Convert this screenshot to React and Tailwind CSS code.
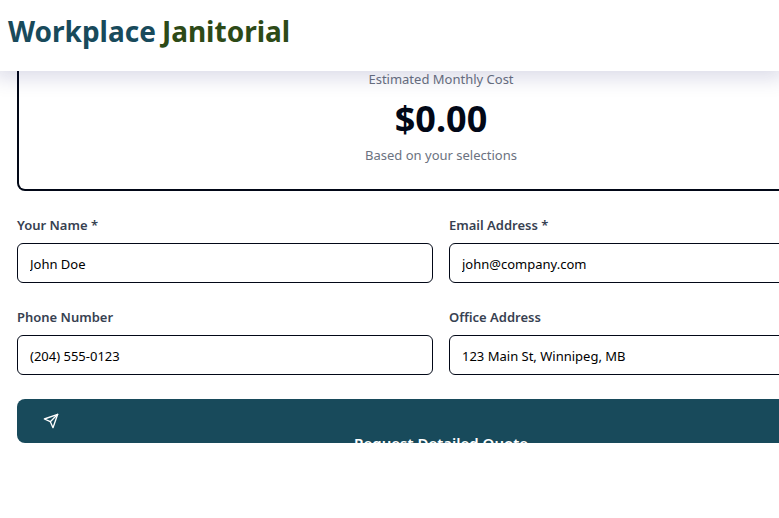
const fields = [
  { id: "name", label: "Your Name *", type: "text", value: "John Doe" },
  { id: "email", label: "Email Address *", type: "email", value: "john@company.com" },
  { id: "phone", label: "Phone Number", type: "tel", value: "(204) 555-0123" },
  { id: "address", label: "Office Address", type: "text", value: "123 Main St, Winnipeg, MB" },
];

function SendIcon() {
  return (
    <svg
      className="size-4 shrink-0"
      viewBox="0 0 24 24"
      fill="none"
      stroke="currentColor"
      strokeWidth="2"
      strokeLinecap="round"
      strokeLinejoin="round"
      aria-hidden="true"
    >
      <path d="m22 2-7 20-4-9-9-4Z" />
      <path d="M22 2 11 13" />
    </svg>
  );
}

function Field({ id, label, type, value }) {
  return (
    <div className="flex flex-col gap-2">
      <label htmlFor={id} className="text-[13px] leading-5 font-semibold text-[#374151]">
        {label}
      </label>
      <input
        id={id}
        type={type}
        placeholder={value}
        className="h-10 w-full rounded-md border border-[#020817] bg-white px-3 pt-0.5 text-[13px] text-black placeholder:text-black"
      />
    </div>
  );
}

export default function App() {
  return (
    <div className="min-h-screen overflow-hidden bg-white font-['Noto_Sans','Open_Sans',sans-serif]">
      <header className="relative z-10 bg-white px-2 pt-[11px] pb-5 shadow-[0_0_20px_6px_rgba(10,10,100,0.16)]">
        <a href="#" className="flex gap-1.5 text-[28px] leading-10 font-bold">
          <span className="text-[#184a5b]">Workplace</span>
          <span className="text-[#2d4a17]">Janitorial</span>
        </a>
      </header>
      <main className="min-w-[882px] px-[17px]">
        <section className="rounded-b-lg border-2 border-t-0 border-[#020817] px-6 pb-6 text-center text-[13px] text-[#6b7280]">
          <p className="leading-4">Estimated Monthly Cost</p>
          <p className="pt-3.5 pb-2 text-4xl leading-9 font-bold text-[#020817]">$0.00</p>
          <p className="leading-5">Based on your selections</p>
        </section>
        <form className="pt-6">
          <div className="grid grid-cols-2 gap-x-4 gap-y-6">
            {fields.map((field) => (
              <Field key={field.id} {...field} />
            ))}
          </div>
          <button
            type="button"
            className="mt-6 flex h-11 w-full flex-col gap-0.5 overflow-hidden rounded-lg bg-[#184a5b] px-[26px] pt-3.5 text-[15px] leading-6 font-semibold text-white"
          >
            <SendIcon />
            <span className="w-full shrink-0 text-center">Request Detailed Quote</span>
          </button>
        </form>
      </main>
    </div>
  );
}
